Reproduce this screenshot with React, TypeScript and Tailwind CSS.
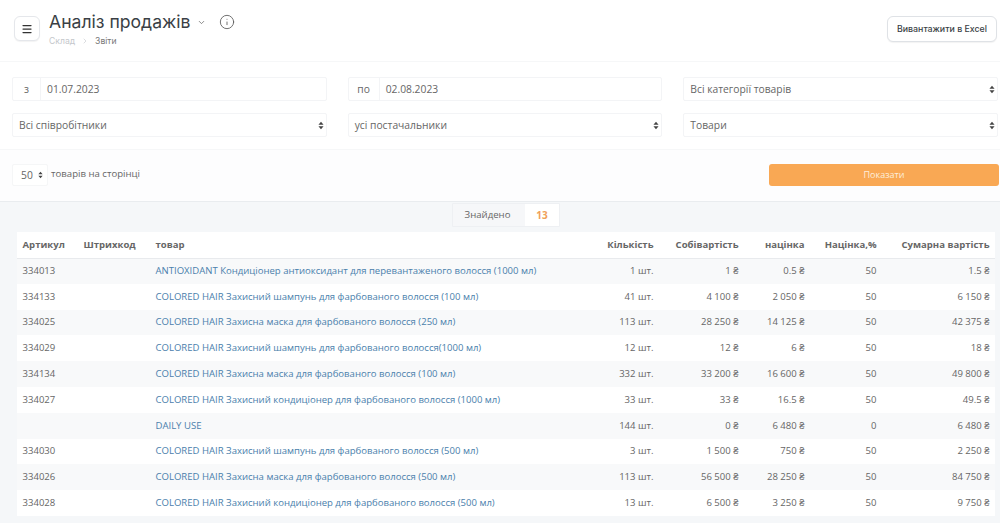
import { ChevronDown, ChevronRight, Info, Menu } from "lucide-react"

const rows = [
  { sku: "334013", name: "ANTIOXIDANT Кондиціонер антиоксидант для перевантаженого волосся (1000 мл)", qty: "1 шт.", cost: "1 ₴", markup: "0.5 ₴", pct: "50", total: "1.5 ₴" },
  { sku: "334133", name: "COLORED HAIR Захисний шампунь для фарбованого волосся (100 мл)", qty: "41 шт.", cost: "4 100 ₴", markup: "2 050 ₴", pct: "50", total: "6 150 ₴" },
  { sku: "334025", name: "COLORED HAIR Захисна маска для фарбованого волосся (250 мл)", qty: "113 шт.", cost: "28 250 ₴", markup: "14 125 ₴", pct: "50", total: "42 375 ₴" },
  { sku: "334029", name: "COLORED HAIR Захисний шампунь для фарбованого волосся(1000 мл)", qty: "12 шт.", cost: "12 ₴", markup: "6 ₴", pct: "50", total: "18 ₴" },
  { sku: "334134", name: "COLORED HAIR Захисна маска для фарбованого волосся (100 мл)", qty: "332 шт.", cost: "33 200 ₴", markup: "16 600 ₴", pct: "50", total: "49 800 ₴" },
  { sku: "334027", name: "COLORED HAIR Захисний кондиціонер для фарбованого волосся (1000 мл)", qty: "33 шт.", cost: "33 ₴", markup: "16.5 ₴", pct: "50", total: "49.5 ₴" },
  { sku: "", name: "DAILY USE", qty: "144 шт.", cost: "0 ₴", markup: "6 480 ₴", pct: "0", total: "6 480 ₴" },
  { sku: "334030", name: "COLORED HAIR Захисний шампунь для фарбованого волосся (500 мл)", qty: "3 шт.", cost: "1 500 ₴", markup: "750 ₴", pct: "50", total: "2 250 ₴" },
  { sku: "334026", name: "COLORED HAIR Захисна маска для фарбованого волосся (500 мл)", qty: "113 шт.", cost: "56 500 ₴", markup: "28 250 ₴", pct: "50", total: "84 750 ₴" },
  { sku: "334028", name: "COLORED HAIR Захисний кондиціонер для фарбованого волосся (500 мл)", qty: "13 шт.", cost: "6 500 ₴", markup: "3 250 ₴", pct: "50", total: "9 750 ₴" },
]

function SortArrows() {
  return (
    <svg width="6" height="9" viewBox="0 0 7 10" className="shrink-0 text-[#444]">
      <path d="M3.5 0.5 L6.5 4 H0.5 Z M3.5 9.5 L0.5 6 H6.5 Z" fill="currentColor" />
    </svg>
  )
}

function SelectBox({ label }: { label: string }) {
  return (
    <div className="flex h-6 items-center justify-between rounded-[2px] border border-[#f3f4f6] bg-white pl-[6px] pr-[2px] text-[10.3px] text-[#666]">
      <span className="pt-[1px]">{label}</span>
      <SortArrows />
    </div>
  )
}

function DateBox({ prefix, value }: { prefix: string; value: string }) {
  return (
    <div className="flex h-6 items-center rounded-[2px] border border-[#f3f4f6] bg-white text-[10.3px] text-[#666]">
      <span className={`flex h-full items-center justify-center border-r border-[#f3f4f6] pt-[1px] ${prefix === "з" ? "w-[28px]" : "w-[31px]"}`}>{prefix}</span>
      <span className="pl-[6px] pt-[1px]">{value}</span>
    </div>
  )
}

export default function App() {
  return (
    <div className="h-[523px] w-[1000px] overflow-hidden bg-[#f5f7f9] font-['Open_Sans',sans-serif]">
      {/* Page header */}
      <div className="flex h-[62px] items-start justify-between border-b border-[#f6f7f8] bg-white pl-[14px] pr-[3px] pt-4">
        <div className="flex items-start gap-[9px]">
          <button className="flex h-[25px] w-[26px] items-center justify-center rounded-[6px] border border-[#e5e7eb] bg-white text-[#333] shadow-[0_1px_1px_rgba(0,0,0,0.05)]">
            <Menu size={12} strokeWidth={2.5} />
          </button>
          <div className="-mt-[6px] font-['Inter',sans-serif]">
            <div className="flex items-center text-[#3a3f45]">
              <h1 className="text-[17.6px] font-normal leading-[24px]">Аналіз продажів</h1>
              <ChevronDown size={9} className="ml-[6px] text-[#666]" strokeWidth={2} />
              <Info size={16} className="ml-[13px] text-[#555]" strokeWidth={1.25} />
            </div>
            <div className="mt-[1px] flex items-center text-[8.6px] leading-[12px]">
              <span className="text-[#c4c7cb]">Склад</span>
              <ChevronRight size={8} className="mx-[6px] text-[#c9ccd0]" />
              <span className="text-[#777]">Звіти</span>
            </div>
          </div>
        </div>
        <button className="h-[26px] w-[110px] rounded-[6px] border border-[#dfe2e6] bg-white font-['Inter',sans-serif] text-[8.8px] font-medium text-[#3a3f45] shadow-[0_1px_1px_rgba(0,0,0,0.05)]">
          Вивантажити в Excel
        </button>
      </div>

      {/* Filters */}
      <div className="grid h-[88px] grid-cols-3 content-start gap-x-[21px] gap-y-3 border-b border-[#f6f7f8] bg-white pl-3 pr-[2px] pt-[15px]">
        <DateBox prefix="з" value="01.07.2023" />
        <DateBox prefix="по" value="02.08.2023" />
        <SelectBox label="Всі категорії товарів" />
        <SelectBox label="Всі співробітники" />
        <SelectBox label="усі постачальники" />
        <SelectBox label="Товари" />
      </div>

      {/* Page size and submit */}
      <div className="flex h-[52px] items-start justify-between border-b border-[#e9ecef] bg-[#fdfdfe] pl-3 pr-[1px] pt-[14px]">
        <div className="flex items-center text-[9.6px] text-[#666]">
          <div className="flex h-[22px] w-[36px] items-center justify-between rounded-[2px] border border-[#f5f6f7] bg-white pl-[8px] pr-[4px] text-[10.3px]">
            <span className="pt-[1px]">50</span>
            <svg width="5" height="8" viewBox="0 0 7 10" className="text-[#444]">
              <path d="M3.5 0.5 L6.5 4 H0.5 Z M3.5 9.5 L0.5 6 H6.5 Z" fill="currentColor" />
            </svg>
          </div>
          <span className="relative -top-[1px] ml-[3px]">товарів на сторінці</span>
        </div>
        <button className="h-[22px] w-[230px] rounded-[3px] bg-[#f9a854] text-[9px] text-[#fdeedd]">Показати</button>
      </div>

      {/* Found counter */}
      <div className="flex h-[30px] justify-center pl-[12px] pt-[1px]">
        <div className="flex h-6 items-center rounded-[1px] border border-[#eef0f3] bg-[#f6f7f9] text-[9.6px]">
          <span className="w-[72px] pr-[3px] text-center text-[#666]">Знайдено</span>
          <span className="flex h-full w-[34px] items-center justify-center bg-white text-[10px] font-bold text-[#f0a05a]">13</span>
        </div>
      </div>

      {/* Results table */}
      <div className="pl-[17px] pr-[5px]">
        <table className="w-[978px] table-fixed border-collapse bg-white text-[9.55px] text-[#666]">
          <colgroup>
            <col className="w-[61px]" />
            <col className="w-[72px]" />
            <col />
            <col className="w-[85px]" />
            <col className="w-[85px]" />
            <col className="w-[66px]" />
            <col className="w-[72px]" />
            <col className="w-[113px]" />
          </colgroup>
          <thead>
            <tr className="h-[26px] border-b border-[#e8eaed]">
              <th className="px-[5.5px] text-left font-bold">Артикул</th>
              <th className="px-[5.5px] text-left font-bold">Штрихкод</th>
              <th className="px-[5.5px] text-left font-bold">товар</th>
              <th className="px-[5.5px] text-right font-bold">Кількість</th>
              <th className="px-[5.5px] text-right font-bold">Собівартість</th>
              <th className="px-[5.5px] text-right font-bold">націнка</th>
              <th className="px-[5.5px] text-right font-bold">Націнка,%</th>
              <th className="px-[5.5px] text-right font-bold">Сумарна вартість</th>
            </tr>
          </thead>
          <tbody>
            {rows.map((r, i) => (
              <tr key={i} className={`h-[25.8px] ${i % 2 === 0 ? "bg-[#f8f9fa]" : "bg-white"}`}>
                <td className="px-[5.5px]">{r.sku}</td>
                <td className="px-[5.5px]"></td>
                <td className="whitespace-nowrap px-[5.5px] text-[#4a80ac]">{r.name}</td>
                <td className="px-[5.5px] text-right">{r.qty}</td>
                <td className="px-[5.5px] text-right">{r.cost}</td>
                <td className="px-[5.5px] text-right">{r.markup}</td>
                <td className="px-[5.5px] text-right">{r.pct}</td>
                <td className="px-[5.5px] text-right">{r.total}</td>
              </tr>
            ))}
          </tbody>
        </table>
      </div>
    </div>
  )
}
